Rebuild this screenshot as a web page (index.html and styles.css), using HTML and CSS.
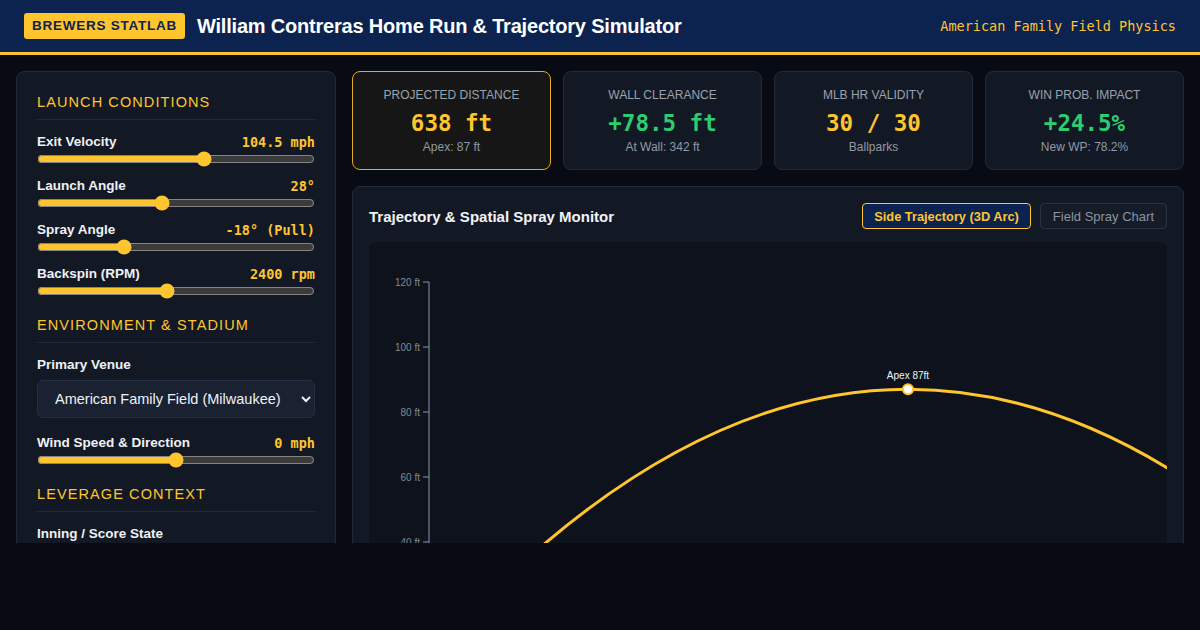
FILE: index.html
```html
<!DOCTYPE html>
<html lang="en">
<head>
    <meta charset="UTF-8">
    <meta name="viewport" content="width=device-width, initial-scale=1.0">
    <title>William Contreras HR Simulator</title>
    <link rel="stylesheet" href="styles.css">
</head>
<body>
<div class="app">
    <!-- Top bar -->
    <header class="topbar">
        <div class="brand">
            <span class="badge">BREWERS STATLAB</span>
            <h1 class="title">William Contreras Home Run &amp; Trajectory Simulator</h1>
        </div>
        <div class="venue-tag">American Family Field Physics</div>
    </header>

    <div class="layout">
        <!-- Controls -->
        <aside class="panel controls">
            <section class="group">
                <h2 class="group-title">Launch Conditions</h2>
                <div class="field">
                    <div class="field-head"><label>Exit Velocity</label><span class="val">104.5 mph</span></div>
                    <input type="range" min="50" max="140" step="0.5" value="104.5">
                </div>
                <div class="field">
                    <div class="field-head"><label>Launch Angle</label><span class="val">28°</span></div>
                    <input type="range" min="-10" max="75" value="28">
                </div>
                <div class="field">
                    <div class="field-head"><label>Spray Angle</label><span class="val">-18° (Pull)</span></div>
                    <input type="range" min="-45" max="45" value="-18">
                </div>
                <div class="field">
                    <div class="field-head"><label>Backspin (RPM)</label><span class="val">2400 rpm</span></div>
                    <input type="range" min="1000" max="4000" step="50" value="2400">
                </div>
            </section>

            <section class="group">
                <h2 class="group-title">Environment &amp; Stadium</h2>
                <div class="field">
                    <label class="block-label">Primary Venue</label>
                    <select class="venue-select">
                        <option>American Family Field (Milwaukee)</option>
                        <option>Wrigley Field (Chicago)</option>
                        <option>Coors Field (Denver)</option>
                    </select>
                </div>
                <div class="field">
                    <div class="field-head"><label>Wind Speed &amp; Direction</label><span class="val">0 mph</span></div>
                    <input type="range" min="-20" max="20" value="0">
                </div>
            </section>

            <section class="group">
                <h2 class="group-title">Leverage Context</h2>
                <div class="field">
                    <label class="block-label">Inning / Score State</label>
                </div>
            </section>
        </aside>

        <!-- Results -->
        <main class="results">
            <div class="stats">
                <div class="stat active">
                    <div class="stat-label">Projected Distance</div>
                    <div class="stat-value gold">638 ft</div>
                    <div class="stat-sub">Apex: 87 ft</div>
                </div>
                <div class="stat">
                    <div class="stat-label">Wall Clearance</div>
                    <div class="stat-value green">+78.5 ft</div>
                    <div class="stat-sub">At Wall: 342 ft</div>
                </div>
                <div class="stat">
                    <div class="stat-label">MLB HR Validity</div>
                    <div class="stat-value gold">30 / 30</div>
                    <div class="stat-sub">Ballparks</div>
                </div>
                <div class="stat">
                    <div class="stat-label">Win Prob. Impact</div>
                    <div class="stat-value green">+24.5%</div>
                    <div class="stat-sub">New WP: 78.2%</div>
                </div>
            </div>

            <div class="panel monitor">
                <div class="monitor-head">
                    <h3 class="monitor-title">Trajectory &amp; Spatial Spray Monitor</h3>
                    <div class="tabs">
                        <button class="tab on">Side Trajectory (3D Arc)</button>
                        <button class="tab">Field Spray Chart</button>
                    </div>
                </div>
                <div class="chart">
                    <svg class="chart-svg" width="798" height="302" viewBox="0 0 798 302">
                        <!-- height axis -->
                        <g class="axis">
                            <line x1="60" y1="40" x2="60" y2="302"/>
                            <line x1="54" y1="40" x2="60" y2="40"/>
                            <line x1="54" y1="105" x2="60" y2="105"/>
                            <line x1="54" y1="170" x2="60" y2="170"/>
                            <line x1="54" y1="235" x2="60" y2="235"/>
                            <line x1="54" y1="300" x2="60" y2="300"/>
                        </g>
                        <g class="axis-labels">
                            <text x="51" y="43.5">120 ft</text>
                            <text x="51" y="108.5">100 ft</text>
                            <text x="51" y="173.5">80 ft</text>
                            <text x="51" y="238.5">60 ft</text>
                            <text x="51" y="303.5">40 ft</text>
                        </g>
                        <!-- ball flight -->
                        <path class="arc" d="M61 414.6 Q539 -120.1 1017 414.6"/>
                        <circle class="apex" cx="539" cy="147.3" r="5"/>
                        <text class="apex-label" x="539" y="137">Apex 87ft</text>
                    </svg>
                </div>
            </div>
        </main>
    </div>
</div>
</body>
</html>
```

FILE: styles.css
```css
html, body {
    margin: 0;
    padding: 0;
    background: #080b13;
    color: #e6e9ef;
    font-family: 'Liberation Sans', Arial, sans-serif;
}

/* Screen area is cut at the fold */
.app {
    height: 543px;
    overflow: hidden;
    color-scheme: dark;
}

/* Header */
.topbar {
    height: 52px;
    background: #0c2350;
    border-bottom: 3px solid #ffc52f;
    display: flex;
    align-items: center;
    justify-content: space-between;
    padding: 0 24px;
}

.brand {
    display: flex;
    align-items: center;
    gap: 12px;
}

.badge {
    background: #ffc52f;
    color: #0c2350;
    font-weight: bold;
    font-size: 13.5px;
    letter-spacing: 0.75px;
    padding: 5px 8px;
    border-radius: 3px;
    line-height: 16px;
}

.title {
    margin: 0;
    font-size: 20px;
    font-weight: bold;
    color: #fff;
    letter-spacing: -0.2px;
}

.venue-tag {
    font-family: 'DejaVu Sans Mono', monospace;
    font-size: 13.5px;
    color: #ffc52f;
}

/* Two columns */
.layout {
    display: flex;
    gap: 16px;
    padding: 16px;
    align-items: flex-start;
}

.panel {
    background: #131924;
    border: 1px solid #222a38;
    border-radius: 8px;
    box-sizing: border-box;
}

.controls {
    width: 320px;
    flex-shrink: 0;
    padding: 20px;
}

.group {
    margin-bottom: 16px;
}

.group-title {
    margin: 0 0 13px;
    padding-bottom: 7px;
    border-bottom: 1px solid #232b3a;
    font-size: 14.5px;
    font-weight: normal;
    letter-spacing: 1.1px;
    text-transform: uppercase;
    color: #ffc52f;
    line-height: 20px;
}

.field {
    margin-bottom: 10px;
}

.field:last-child {
    margin-bottom: 0;
}

.field-head {
    display: flex;
    justify-content: space-between;
    align-items: center;
    height: 17px;
}

.field-head label,
.block-label {
    font-size: 13.5px;
    font-weight: bold;
    color: #eef1f6;
}

.block-label {
    display: block;
    line-height: 17px;
    margin-bottom: 7px;
}

.val {
    font-family: 'DejaVu Sans Mono', monospace;
    font-weight: bold;
    font-size: 13.5px;
    color: #ffc52f;
}

.field input[type="range"] {
    display: block;
    width: 100%;
    margin: 1px 0 0;
    height: 16px;
    accent-color: #ffc52f;
}

.venue-select {
    display: block;
    width: 100%;
    height: 38px;
    box-sizing: border-box;
    padding: 0 10px 0 13px;
    background: #1a2231;
    color: #eef1f6;
    border: 1px solid #263042;
    border-radius: 6px;
    font-family: 'Liberation Sans', Arial, sans-serif;
    font-size: 14.5px;
    margin-bottom: 16px;
}

/* Results column */
.results {
    flex: 1;
    min-width: 0;
    display: flex;
    flex-direction: column;
    gap: 16px;
}

.stats {
    display: flex;
    gap: 12px;
}

.stat {
    flex: 1;
    background: #131924;
    border: 1px solid #222a38;
    border-radius: 8px;
    padding: 15px 10px;
    text-align: center;
    height: 99px;
    box-sizing: border-box;
}

.stat.active {
    background: #161616;
    border-color: #e3ab27;
}

.stat-label {
    font-size: 12px;
    text-transform: uppercase;
    color: #9aa2ae;
    line-height: 16px;
}

.stat-value {
    font-family: 'DejaVu Sans Mono', monospace;
    font-weight: bold;
    font-size: 22.5px;
    line-height: 26px;
    margin: 7px 0 3px;
}

.gold { color: #ffc52f; }
.green { color: #2ecc71; }

.stat-sub {
    font-size: 12px;
    color: #9099a6;
    line-height: 16px;
}

.monitor {
    padding: 16px;
    height: 420px;
}

.monitor-head {
    display: flex;
    justify-content: space-between;
    align-items: center;
    margin-bottom: 13px;
}

.monitor-title {
    margin: 0;
    font-size: 15px;
    font-weight: bold;
    color: #f1f3f7;
}

.tabs {
    display: flex;
    gap: 9px;
}

.tab {
    height: 26px;
    padding: 0 12px;
    border-radius: 4px;
    font-family: 'Liberation Sans', Arial, sans-serif;
    font-size: 13px;
    background: #151b27;
    border: 1px solid #2a3344;
    color: #8b94a2;
    cursor: pointer;
}

.tab.on {
    padding: 0 11px;
    font-size: 12.8px;
    background: #0c2350;
    border-color: #ffc52f;
    color: #ffc52f;
    font-weight: bold;
}

.chart {
    background: #0d121c;
    border-radius: 8px;
    height: 430px;
}

.chart-svg {
    display: block;
}

.axis line {
    stroke: #8b95a4;
    stroke-width: 1;
}

.axis-labels text {
    font-family: 'Liberation Sans', Arial, sans-serif;
    font-size: 10px;
    fill: #808a99;
    text-anchor: end;
}

.arc {
    fill: none;
    stroke: #ffc52f;
    stroke-width: 3;
}

.apex {
    fill: #fff;
    stroke: #ffc52f;
    stroke-width: 2;
}

.apex-label {
    font-family: 'Liberation Sans', Arial, sans-serif;
    font-size: 10px;
    fill: #f1f3f7;
    text-anchor: middle;
}
```
